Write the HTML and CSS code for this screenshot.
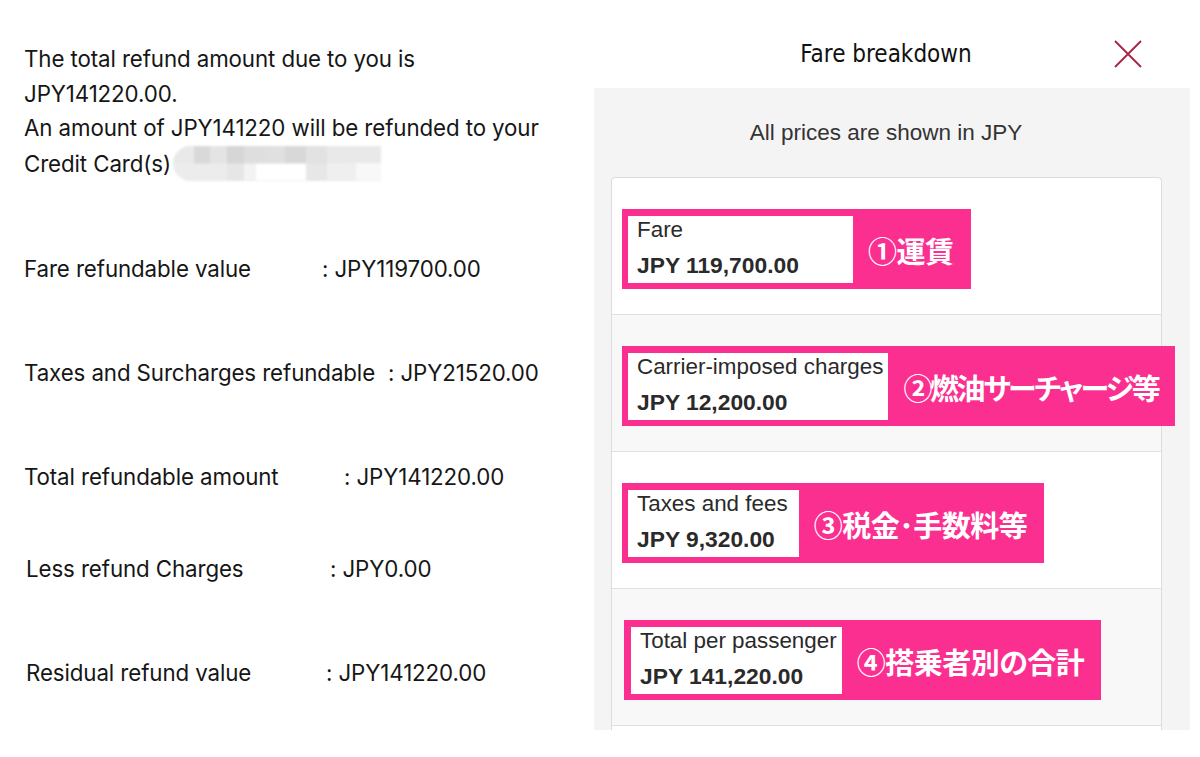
FILE: index.html
```html
<!DOCTYPE html>
<html lang="en">
<head>
<meta charset="utf-8">
<title>Refund and fare breakdown</title>
<link rel="stylesheet" href="styles.css">
</head>
<body>
<div class="page">
  <section class="refund">
    <p class="intro">The total refund amount due to you is<br>JPY141220.00.<br>An amount of JPY141220 will be refunded to your<br>Credit Card(s)<span class="masked" aria-hidden="true"></span></p>
    <div class="line r1"><span class="lbl">Fare refundable value</span><span class="val">: JPY119700.00</span></div>
    <div class="line r2"><span class="lbl">Taxes and Surcharges refundable</span><span class="val">: JPY21520.00</span></div>
    <div class="line r3"><span class="lbl">Total refundable amount</span><span class="val">: JPY141220.00</span></div>
    <div class="line r4"><span class="lbl">Less refund Charges</span><span class="val">: JPY0.00</span></div>
    <div class="line r5"><span class="lbl">Residual refund value</span><span class="val">: JPY141220.00</span></div>
  </section>

  <aside class="breakdown">
    <header class="bd-head">
      <span></span>
      <h2 class="bd-title">Fare breakdown</h2>
      <button class="close" aria-label="Close">
        <svg width="30" height="30" viewBox="0 0 30 30"><path d="M2 2 L28 28 M28 2 L2 28" stroke="#a8233f" stroke-width="1.8" fill="none"/></svg>
      </button>
    </header>
    <div class="bd-body">
      <p class="note">All prices are shown in JPY</p>
      <div class="card">
        <div class="row">
          <div class="mark">
            <div class="box wide"><div class="k">Fare</div><div class="amt">JPY 119,700.00</div></div>
            <span class="jp">①運賃</span>
          </div>
        </div>
        <div class="row alt">
          <div class="mark">
            <div class="box"><div class="k">Carrier-imposed charges</div><div class="amt">JPY 12,200.00</div></div>
            <span class="jp tight">②燃油サーチャージ等</span>
          </div>
        </div>
        <div class="row">
          <div class="mark">
            <div class="box roomy"><div class="k">Taxes and fees</div><div class="amt">JPY 9,320.00</div></div>
            <span class="jp">③税金･手数料等</span>
          </div>
        </div>
        <div class="row alt">
          <div class="mark m4">
            <div class="box"><div class="k">Total per passenger</div><div class="amt">JPY 141,220.00</div></div>
            <span class="jp">④搭乗者別の合計</span>
          </div>
        </div>
        <div class="row"></div>
      </div>
    </div>
  </aside>
</div>
</body>
</html>
```

FILE: styles.css
```css
* { box-sizing: border-box; }
html, body { margin: 0; padding: 0; background: #fff; }
body {
  width: 1200px;
  height: 757px;
  overflow: hidden;
  font-family: "Liberation Sans", Arial, sans-serif;
  color: #161616;
}
.page {
  display: flex;
  align-items: flex-start;
  height: 757px;
}

/* Left column */
.refund {
  width: 594px;
  padding: 42px 0 0 24px;
  font-family: Inter, "Liberation Sans", sans-serif;
  font-size: 22.3px;
  letter-spacing: -0.1px;
}
.intro {
  margin: 0;
  line-height: 34.6px;
}
.masked {
  display: inline-block;
  vertical-align: -9px;
  width: 208px;
  height: 35px;
  margin-left: 2px;
  border-radius: 18px 0 0 18px;
  background:
    linear-gradient(90deg,
      transparent 0 10%, #d9d9d9 10% 18%, #e4e4e4 18% 26%, #d6d6d6 26% 34%,
      #dedede 34% 44%, #e0e0e0 44% 54%, #d8d8d8 54% 64%, #e2e2e2 64% 74%, #e9e9e9 74% 84%, transparent 84%) top / 100% 50% no-repeat,
    linear-gradient(90deg,
      #ececec 0 26%, #e6e6e6 26% 34%, #f3f3f3 34% 40%, #fff 40% 64%, #e7e7e7 64% 74%, #efefef 74% 88%, #f8f8f8 88%) bottom / 100% 50% no-repeat,
    #e9e9e9;
  filter: blur(1.2px);
}
.line {
  display: grid;
  line-height: 35px;
  margin-top: 69px;
}
.line:first-of-type { margin-top: 70px; }
.line.r4 { margin-top: 57px; padding-left: 2px; }
.line.r5 { margin-top: 69px; padding-left: 2px; }
.r1 { grid-template-columns: 298px auto; }
.r2 { grid-template-columns: 364px auto; }
.r3 { grid-template-columns: 320px auto; }
.r4 { grid-template-columns: 304px auto; }
.r5 { grid-template-columns: 300px auto; }
.lbl, .val { white-space: nowrap; }

/* Right panel */
.breakdown {
  width: 596px;
  display: flex;
  flex-direction: column;
}
.bd-head {
  height: 88px;
  display: grid;
  grid-template-columns: 1fr auto 1fr;
  align-items: center;
  padding-top: 19px;
}
.bd-title {
  margin: 0;
  font-family: "Liberation Sans Narrow", "DejaVu Sans Condensed", sans-serif;
  font-weight: normal;
  font-size: 24px;
  color: #111;
  transform: translateX(-6px);
}
.close {
  justify-self: end;
  margin-right: 47px;
  border: 0;
  background: none;
  padding: 0;
  width: 30px;
  height: 30px;
  display: flex;
}
.bd-body {
  background: #f5f4f5;
  height: 642px;
  overflow: hidden;
  padding: 32px 0 0 17px;
}
.note {
  margin: 0 0 31px -17px;
  text-align: center;
  font-size: 22.5px;
  line-height: 26px;
  color: #333;
  transform: translateX(-6px);
}
.card {
  width: 551px;
  background: #fff;
  border: 1px solid #dcdcdc;
  border-radius: 4px;
}
.row {
  height: 137px;
  padding: 31px 0 0 10px;
  border-top: 1px solid #e0e0e0;
  white-space: nowrap;
}
.row:first-child { border-top: 0; height: 136px; border-radius: 4px 4px 0 0; }
.row.alt { background: #f9f8f9; }
.mark {
  display: inline-flex;
  align-items: center;
  background: #fb2f90;
  padding: 7px 17px 6px 6px;
  height: 80px;
}
.mark.m4 { margin-left: 2px; padding-left: 7px; }
.box {
  background: #fff;
  height: 67px;
  padding: 0 5px 2px 9px;
  color: #2a2a2a;
}
.box.wide { width: 225px; }
.box.roomy { padding-right: 11px; }
.k {
  font-size: 22.4px;
  line-height: 28px;
  white-space: nowrap;
}
.amt {
  font-size: 22.8px;
  font-weight: bold;
  line-height: 30px;
  margin-top: 6px;
  white-space: nowrap;
}
.jp {
  margin-left: 15px;
  font-family: "Noto Sans CJK JP", sans-serif;
  font-weight: bold;
  font-size: 29px;
  color: #fff;
  white-space: nowrap;
  font-feature-settings: "palt";
  letter-spacing: -0.5px;
}
.jp.tight { letter-spacing: -2.4px; }
```
